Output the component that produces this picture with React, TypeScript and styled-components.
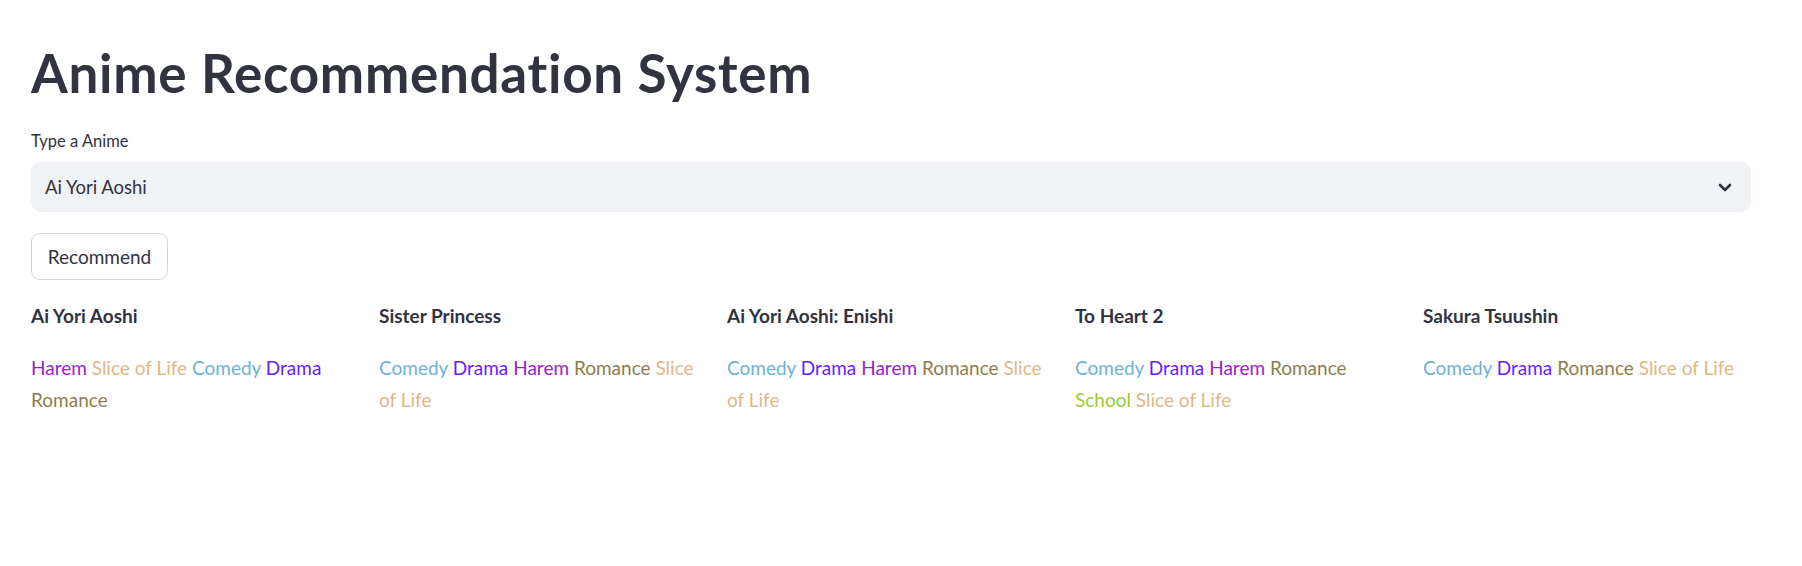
import { Fragment } from "react";
import styled, { createGlobalStyle } from "styled-components";

const GlobalStyle = createGlobalStyle`
  body {
    margin: 0;
    background: #ffffff;
    font-family: Lato, "Liberation Sans", sans-serif;
    color: #31333f;
  }
`;

const GENRE_COLORS: Record<string, string> = {
  Harem: "#9b22c9",
  "Slice of Life": "#deb887",
  Comedy: "#6fb1d9",
  Drama: "#6a1cff",
  Romance: "#8f7d4c",
  School: "#9acd32",
};

const results = [
  { title: "Ai Yori Aoshi", genres: ["Harem", "Slice of Life", "Comedy", "Drama", "Romance"] },
  { title: "Sister Princess", genres: ["Comedy", "Drama", "Harem", "Romance", "Slice of Life"] },
  { title: "Ai Yori Aoshi: Enishi", genres: ["Comedy", "Drama", "Harem", "Romance", "Slice of Life"] },
  { title: "To Heart 2", genres: ["Comedy", "Drama", "Harem", "Romance", "School", "Slice of Life"] },
  { title: "Sakura Tsuushin", genres: ["Comedy", "Drama", "Romance", "Slice of Life"] },
];

function App() {
  return (
    <Page>
      <GlobalStyle />
      <Title>Anime Recommendation System</Title>
      <Label>Type a Anime</Label>
      <Select>
        <SelectValue>Ai Yori Aoshi</SelectValue>
        <Chevron viewBox="0 0 24 24">
          <path d="M7 10l5 5 5-5" />
        </Chevron>
      </Select>
      <Button>Recommend</Button>
      <Columns>
        {results.map((r) => (
          <Column key={r.title}>
            <Name>{r.title}</Name>
            <Genres>
              {r.genres.map((g, i) => (
                <Fragment key={g}>
                  {i > 0 ? " " : ""}
                  <Genre color={GENRE_COLORS[g]}>{g}</Genre>
                </Fragment>
              ))}
            </Genres>
          </Column>
        ))}
      </Columns>
    </Page>
  );
}

export default App;

export const Page = styled.div`
  padding: 43px 51px 0 31px;
`;

export const Title = styled.h1`
  margin: 0;
  font-size: 53px;
  font-weight: 700;
  line-height: 60px;
  color: #31333f;
  letter-spacing: 0.7px;
`;

export const Label = styled.div`
  margin-top: 28px;
  font-size: 16.5px;
  line-height: 21px;
  color: #31333f;
`;

export const Select = styled.div`
  margin-top: 10px;
  height: 50px;
  background-color: #f0f2f6;
  border-radius: 10px;
  display: flex;
  align-items: center;
  justify-content: space-between;
  padding: 0 14px;
`;

export const SelectValue = styled.span`
  font-size: 18.5px;
  line-height: 24px;
  color: #31333f;
`;

export const Chevron = styled.svg`
  width: 24px;
  height: 24px;
  fill: none;
  stroke: #31333f;
  stroke-width: 2.6;
  stroke-linecap: round;
  stroke-linejoin: round;
`;

export const Button = styled.button`
  margin-top: 21px;
  height: 47px;
  width: 137px;
  border: 1px solid rgba(49, 51, 63, 0.2);
  border-radius: 9px;
  background-color: #ffffff;
  font-family: Lato, "Liberation Sans", sans-serif;
  font-size: 19px;
  color: #31333f;
  padding: 0;
  cursor: pointer;
`;

export const Columns = styled.div`
  margin-top: 20px;
  display: grid;
  grid-template-columns: repeat(5, 1fr);
  column-gap: 20px;
`;

export const Column = styled.div`
  display: flex;
  flex-direction: column;
`;

export const Name = styled.div`
  font-size: 19px;
  font-weight: 700;
  line-height: 32px;
  color: #31333f;
`;

export const Genres = styled.div`
  margin-top: 20px;
  font-size: 19px;
  line-height: 32px;
`;

export const Genre = styled.span<{ color: string }>`
  color: ${(p) => p.color};
`;
